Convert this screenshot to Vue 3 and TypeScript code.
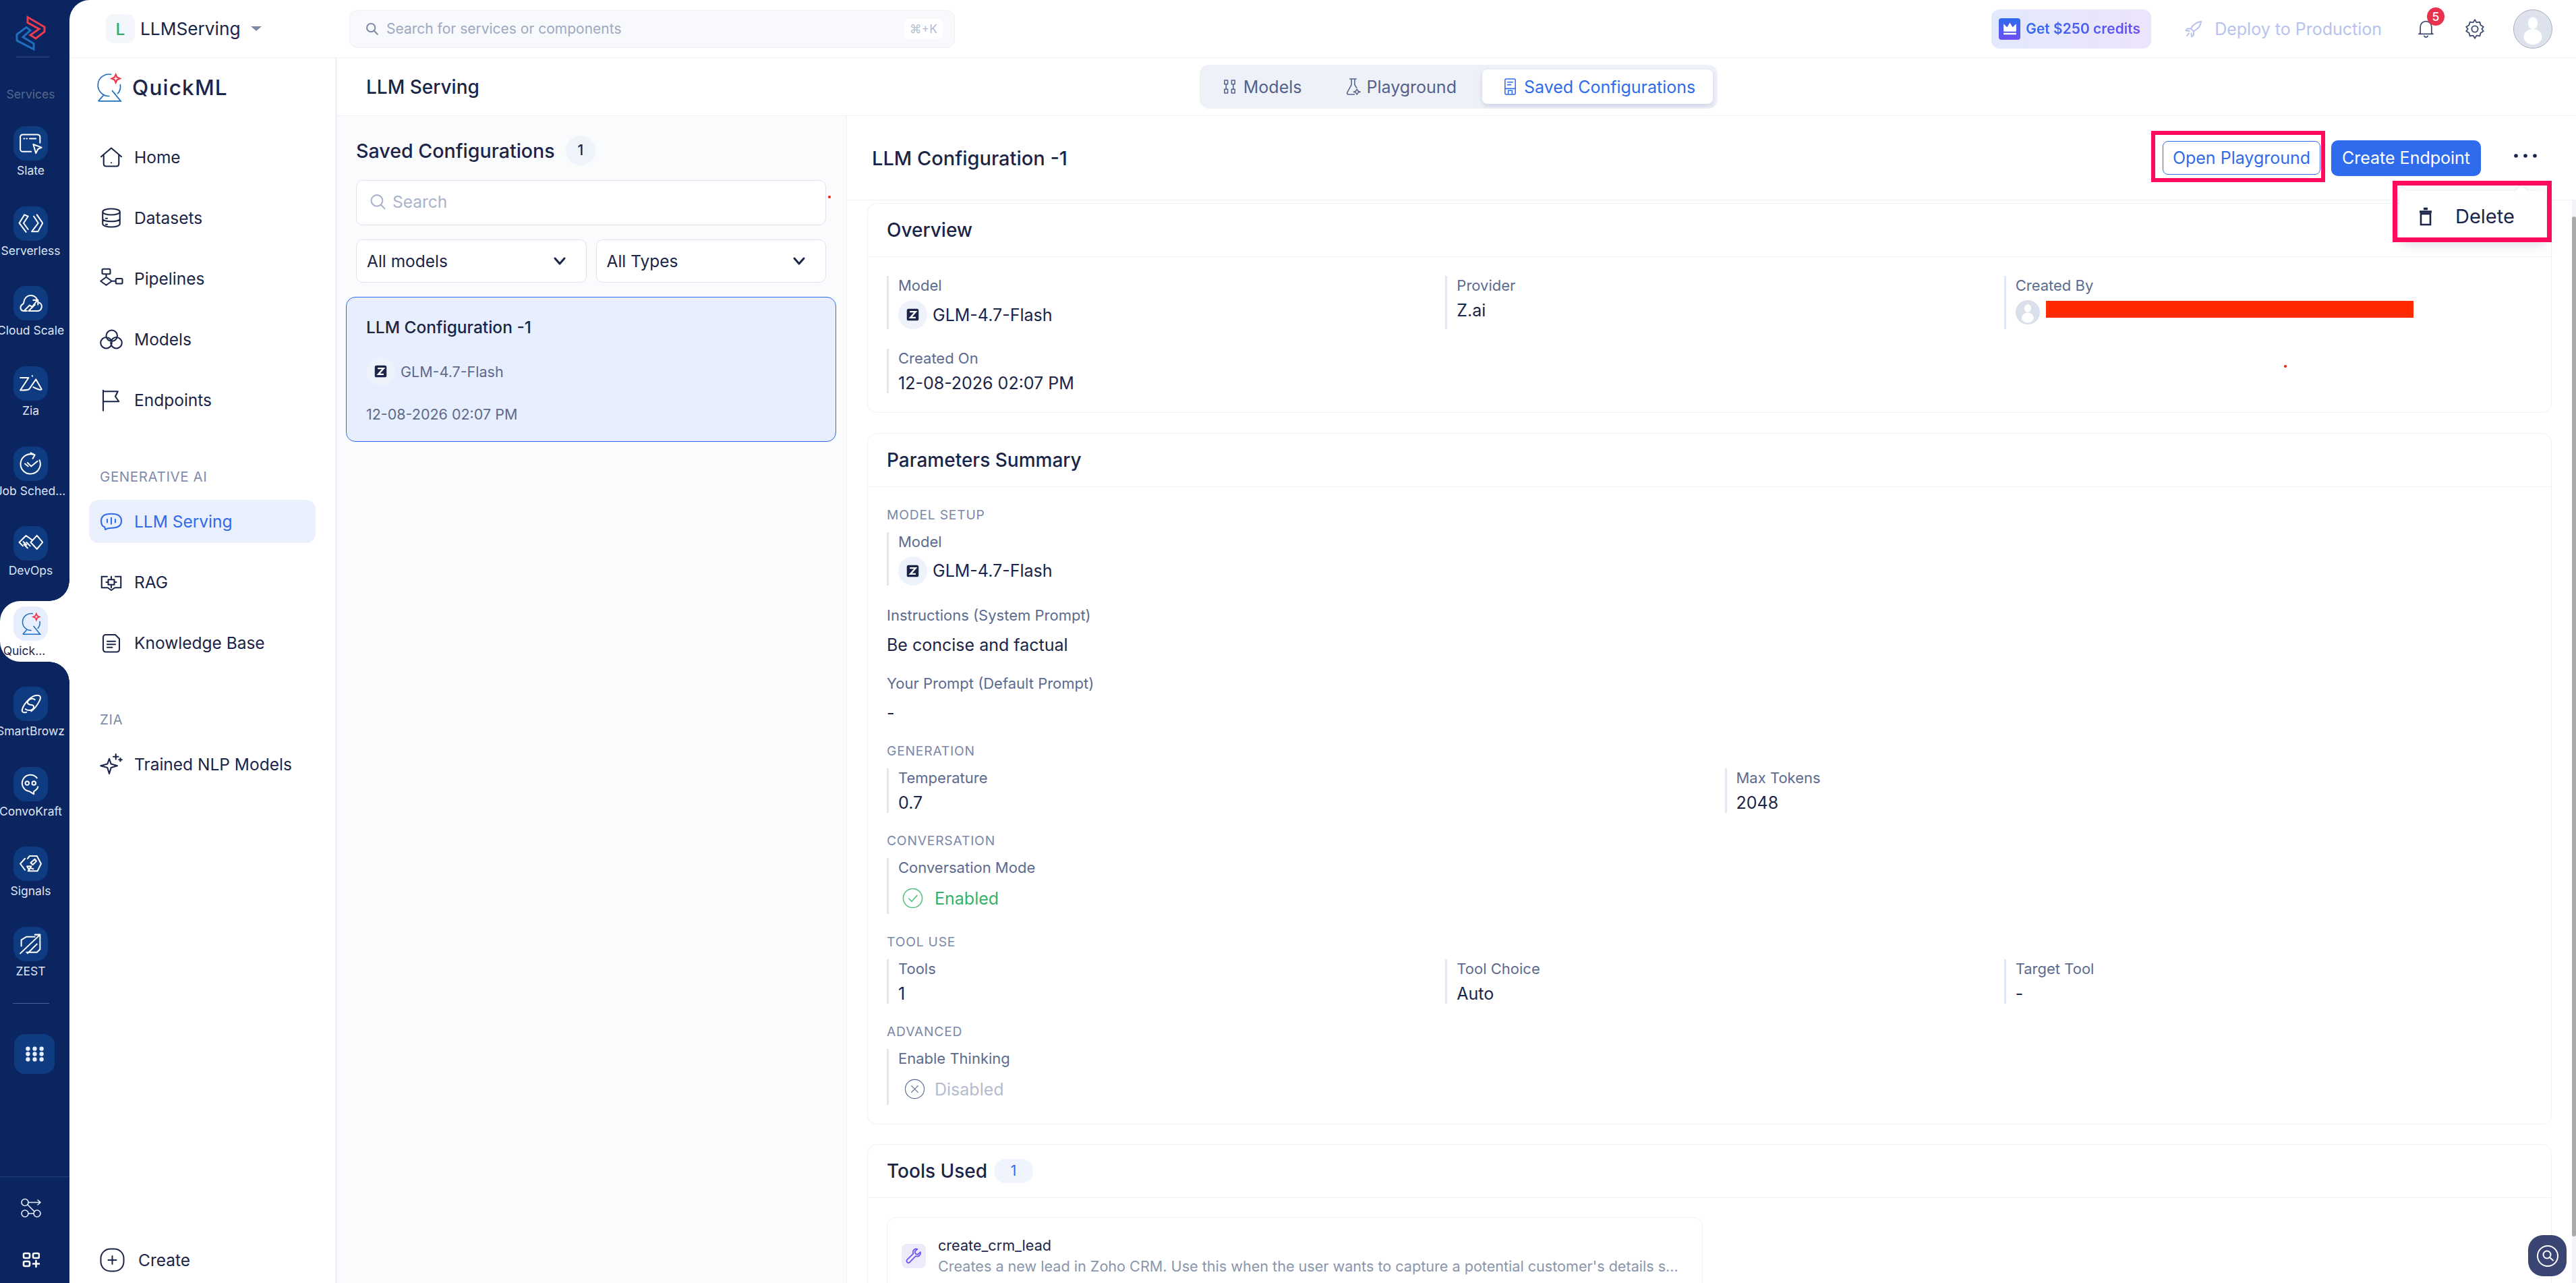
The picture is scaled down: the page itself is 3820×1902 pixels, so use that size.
<template>
  <div class="app">
    <aside class="rail">
      <div class="rail-logo">
        <svg class="logo-mark" viewBox="22 22 47 54" fill="none" stroke-width="3">
          <path stroke="#ee3a4f" d="M41 25.500 66 40v7L53 57l-8-5 13-9-17-9.500z" />
          <path stroke="#1f6fc0" d="M45 45l-6-4.500L25 51v9l25 13v-8.500L34 55z" />
        </svg>
      </div>
      <div class="rail-title">Services</div>
      <a v-for="item in railItems" :key="item.label" class="rail-item" :class="{ active: item.active }">
        <span class="rail-pill">
          <svg v-if="item.active" class="quick-small" viewBox="140 105 42 48" fill="none" stroke-width="2.200">
            <path stroke="#1f6fc0" d="M165 108.500a17.500 17.500 0 1 0-3 34.500M179 124a17 17 0 0 1-4.500 15.500M144 151h36l-14-17M144 151l8-9" />
            <path stroke="#ee3a4f" stroke-width="2.600" d="M172 108.500l2 4.500 4.500 2-4.500 2-2 4.500-2-4.500-4.500-2 4.500-2z" />
          </svg>
          <svg v-else class="rail-icon" viewBox="0 0 24 24" fill="none" stroke="currentColor" stroke-width="1.300" stroke-linecap="round" stroke-linejoin="round">
            <path :d="item.icon" />
          </svg>
        </span>
        <span class="rail-label">{{ item.label }}</span>
      </a>
      <div class="rail-rule"></div>
      <button class="rail-grid">
        <svg viewBox="0 0 24 24" fill="#e9eefb">
          <template v-for="y in [5, 12, 19]" :key="y">
            <circle v-for="x in [3, 12, 21]" :key="x" :cx="x" :cy="y" r="2.800" />
          </template>
        </svg>
      </button>
      <div class="rail-foot">
        <svg class="foot-flow" viewBox="0 0 30 29" fill="none" stroke="#e9eefb" stroke-width="1.600" stroke-linecap="round" stroke-linejoin="round">
          <circle cx="6" cy="6.500" r="5" />
          <circle cx="6" cy="23" r="5" />
          <circle cx="24" cy="23" r="5" />
          <path d="M11 6.500h18M25 3l4 3.500-4 3.500M10 10l10 10M11 23h8" />
        </svg>
        <svg class="foot-apps" viewBox="0 0 26 24" fill="none" stroke="#fff" stroke-width="2.600" stroke-linecap="round">
          <rect x="2" y="2" width="9" height="7" rx="2" />
          <rect x="16" y="2" width="9" height="7" rx="2" />
          <rect x="2" y="14" width="9" height="7" rx="2" />
          <path d="M20.500 13v9M16 17.500h9" />
        </svg>
      </div>
    </aside>

    <div class="shell">
      <header class="topbar">
        <div class="project">
          <span class="project-tile">L</span>
          <span class="project-name">LLMServing</span>
          <span class="project-caret"></span>
        </div>
        <div class="global-search">
          <svg class="search-icon" viewBox="0 0 24 24" fill="none" stroke="#7f8aa6" stroke-width="2.400" stroke-linecap="round">
            <circle cx="10.500" cy="10.500" r="7" />
            <path d="M16 16l5.500 5.500" />
          </svg>
          <span class="global-search-text">Search for services or components</span>
          <kbd class="shortcut">⌘+K</kbd>
        </div>
        <div class="top-actions">
          <div class="credits">
            <span class="crown">
              <svg viewBox="0 0 24 24" fill="#fff">
                <path d="M3 5l5 5 4-6.500L16 10l5-5v11H3zM3 18h18v2.500H3z" />
              </svg>
            </span>
            <span class="credits-text">Get $250 credits</span>
          </div>
          <div class="deploy">
            <svg class="rocket" viewBox="0 0 24 24" fill="none" stroke="#b7c2ee" stroke-width="1.700" stroke-linejoin="round" stroke-linecap="round">
              <path d="M21.500 2.500c-6 .5-10 3.500-13 9l3.500 3.500c5.500-3 9-7 9.500-12.500zM8.500 11.500H4L2 14l4.500.5M12 15v4.500L9.500 22 9 17.500M6 17.500l-2.500 3" />
            </svg>
            <span>Deploy to Production</span>
          </div>
          <span class="bell">
            <svg viewBox="0 0 24 28" fill="none" stroke="#3f4c6e" stroke-width="1.700" stroke-linecap="round" stroke-linejoin="round">
              <path d="M4 20V11a8 8 0 0 1 16 0v9l2 1H2zM9.500 24a2.700 2.700 0 0 0 5 0" />
            </svg>
            <b class="bell-badge">5</b>
          </span>
          <svg class="gear" viewBox="0 0 24 24" fill="none" stroke="#3f4c6e" stroke-width="1.500" stroke-linejoin="round">
            <path d="M12 1.500l2 3.300 3.800-.6 1.100 3.700 3.300 2-1.900 2.600 1.900 2.600-3.300 2-1.100 3.700-3.800-.6-2 3.300-2-3.300-3.800.6-1.100-3.700-3.300-2 1.900-2.600-1.900-2.600 3.300-2 1.100-3.700 3.800.6z" transform="translate(0 -.5)" />
            <circle cx="12" cy="12" r="3.700" />
          </svg>
          <span class="avatar">
            <svg viewBox="0 0 58 58" fill="#fff">
              <ellipse cx="29" cy="20" rx="7.500" ry="9" />
              <ellipse cx="29" cy="41" rx="14" ry="12" />
            </svg>
          </span>
        </div>
      </header>

      <div class="body">
        <nav class="side">
          <div class="brand">
            <svg class="brand-logo" viewBox="140 105 42 48" fill="none" stroke-width="1.800">
              <path stroke="#1f6fc0" d="M165 108.500a17.500 17.500 0 1 0-3 34.500M179 124a17 17 0 0 1-4.500 15.500M144 151h36l-14-17M144 151l8-9" />
              <path stroke="#ee3a4f" stroke-width="2.400" d="M172 108.500l2 4.500 4.500 2-4.500 2-2 4.500-2-4.500-4.500-2 4.500-2z" />
            </svg>
            <span class="brand-name">QuickML</span>
          </div>
          <div class="nav-list">
            <a v-for="item in navMain" :key="item.label" class="nav-item">
              <svg class="nav-icon" viewBox="0 0 24 24" fill="none" stroke="currentColor" stroke-width="1.400" stroke-linecap="round" stroke-linejoin="round"><path :d="item.icon" /></svg>
              {{ item.label }}
            </a>
          </div>
          <div class="nav-section">GENERATIVE AI</div>
          <div class="nav-list">
            <a v-for="item in navGenerative" :key="item.label" class="nav-item" :class="{ active: item.active }">
              <svg class="nav-icon" viewBox="0 0 24 24" fill="none" stroke="currentColor" stroke-width="1.400" stroke-linecap="round" stroke-linejoin="round"><path :d="item.icon" /></svg>
              {{ item.label }}
            </a>
          </div>
          <div class="nav-section">ZIA</div>
          <div class="nav-list">
            <a v-for="item in navZia" :key="item.label" class="nav-item">
              <svg class="nav-icon" viewBox="0 0 24 24" fill="none" stroke="currentColor" stroke-width="1.400" stroke-linecap="round" stroke-linejoin="round"><path :d="item.icon" /></svg>
              {{ item.label }}
            </a>
          </div>
          <a class="create">
            <svg class="create-icon" viewBox="0 0 37 36" fill="none" stroke="#1b2547" stroke-width="2" stroke-linecap="round">
              <rect x="1.500" y="1.500" width="34" height="33" rx="14" />
              <path d="M18.500 12v12M12.500 18h12" />
            </svg>
            Create
          </a>
        </nav>

        <main class="main">
          <div class="pagehead">
            <h1 class="page-title">LLM Serving</h1>
            <div class="tabs">
              <a v-for="tab in tabs" :key="tab.label" class="tab" :class="{ active: tab.active }">
                <svg class="tab-icon" viewBox="0 0 24 28" fill="none" stroke="currentColor" stroke-width="1.600" stroke-linecap="round" stroke-linejoin="round"><path :d="tab.icon" /></svg>
                {{ tab.label }}
              </a>
            </div>
          </div>

          <div class="content">
            <section class="list">
              <div class="list-head">
                <h2 class="list-title">Saved Configurations</h2>
                <span class="count-circle">1</span>
              </div>
              <div class="list-search">
                <svg class="list-search-icon" viewBox="0 0 24 24" fill="none" stroke="#a9b3c9" stroke-width="2" stroke-linecap="round">
                  <circle cx="10.500" cy="10.500" r="8" />
                  <path d="M16.500 16.500l5 5.500" />
                </svg>
                Search
              </div>
              <div class="selects">
                <div v-for="s in selects" :key="s" class="select">
                  {{ s }}
                  <svg class="chev" viewBox="0 0 20 14" fill="none" stroke="#1b2547" stroke-width="3" stroke-linecap="round" stroke-linejoin="round"><path d="M3 3l7 8 7-8" /></svg>
                </div>
              </div>
              <article class="config-card">
                <div class="config-title">LLM Configuration -1</div>
                <div class="config-model">
                  <span class="model-logo">
                    <svg viewBox="0 0 24 24"><rect x="2" y="2" width="20" height="20" rx="3" fill="#1b2547" /><path d="M7 7h10L8 17h9" fill="none" stroke="#fff" stroke-width="2.600" /></svg>
                  </span>
                  GLM-4.7-Flash
                </div>
                <div class="config-date">12-08-2026 02:07 PM</div>
              </article>
            </section>

            <section class="detail">
              <div class="detail-head">
                <h2 class="detail-title">LLM Configuration -1</h2>
                <div class="detail-actions">
                  <div class="annotated open-note">
                    <button class="btn btn-outline">Open Playground</button>
                  </div>
                  <button class="btn btn-primary">Create Endpoint</button>
                  <button class="more">
                    <svg viewBox="0 0 36 10" fill="#1b2547"><circle cx="4" cy="5" r="2.800" /><circle cx="18" cy="5" r="2.800" /><circle cx="32" cy="5" r="2.800" /></svg>
                  </button>
                  <div class="popover">
                    <svg class="trash" viewBox="0 0 20 28" fill="none" stroke="#1b2547" stroke-width="2.600">
                      <path d="M3 10h14v16H3z" />
                      <path d="M1 7h18M7 2.500h6" stroke-width="3.400" />
                    </svg>
                    Delete
                  </div>
                  <div class="delete-note"></div>
                </div>
              </div>

              <div class="detail-body">
                <div class="panel">
                  <div class="panel-head">Overview</div>
                  <div class="panel-body overview">
                    <div class="field">
                      <div class="label">Model</div>
                      <div class="model-value">
                        <span class="model-logo">
                          <svg viewBox="0 0 24 24"><rect x="2" y="2" width="20" height="20" rx="3" fill="#1b2547" /><path d="M7 7h10L8 17h9" fill="none" stroke="#fff" stroke-width="2.600" /></svg>
                        </span>
                        GLM-4.7-Flash
                      </div>
                    </div>
                    <div class="field">
                      <div class="label">Provider</div>
                      <div class="value">Z.ai</div>
                    </div>
                    <div class="field">
                      <div class="label">Created By</div>
                      <div class="creator">
                        <span class="creator-avatar">
                          <svg viewBox="0 0 36 36" fill="#fff"><ellipse cx="18" cy="12" rx="5" ry="6" /><ellipse cx="18" cy="26" rx="9" ry="7.500" /></svg>
                        </span>
                        <span class="redacted"></span>
                      </div>
                    </div>
                    <div class="field">
                      <div class="label">Created On</div>
                      <div class="value">12-08-2026 02:07 PM</div>
                    </div>
                  </div>
                </div>

                <div class="panel">
                  <div class="panel-head">Parameters Summary</div>
                  <div class="panel-body params">
                    <div class="group-label">MODEL SETUP</div>
                    <div class="field">
                      <div class="label">Model</div>
                      <div class="model-value">
                        <span class="model-logo">
                          <svg viewBox="0 0 24 24"><rect x="2" y="2" width="20" height="20" rx="3" fill="#1b2547" /><path d="M7 7h10L8 17h9" fill="none" stroke="#fff" stroke-width="2.600" /></svg>
                        </span>
                        GLM-4.7-Flash
                      </div>
                    </div>
                    <div class="plain plain-first">
                      <div class="label">Instructions (System Prompt)</div>
                      <div class="value plain-value">Be concise and factual</div>
                    </div>
                    <div class="plain">
                      <div class="label">Your Prompt (Default Prompt)</div>
                      <div class="value plain-value">-</div>
                    </div>

                    <div class="group">
                      <div class="group-label">GENERATION</div>
                      <div class="two-col">
                        <div class="field">
                          <div class="label">Temperature</div>
                          <div class="value">0.7</div>
                        </div>
                        <div class="field">
                          <div class="label">Max Tokens</div>
                          <div class="value">2048</div>
                        </div>
                      </div>
                    </div>

                    <div class="group">
                      <div class="group-label">CONVERSATION</div>
                      <div class="field">
                        <div class="label">Conversation Mode</div>
                        <div class="status enabled">
                          <svg viewBox="0 0 32 32" fill="none" stroke="#4fc27c" stroke-width="1.600" stroke-linecap="round" stroke-linejoin="round"><circle cx="16" cy="16" r="14.500" /><path d="M10 16.500l4.500 4.500 8-9" /></svg>
                          Enabled
                        </div>
                      </div>
                    </div>

                    <div class="group">
                      <div class="group-label">TOOL USE</div>
                      <div class="three-col">
                        <div class="field">
                          <div class="label">Tools</div>
                          <div class="value">1</div>
                        </div>
                        <div class="field">
                          <div class="label">Tool Choice</div>
                          <div class="value">Auto</div>
                        </div>
                        <div class="field">
                          <div class="label">Target Tool</div>
                          <div class="value">-</div>
                        </div>
                      </div>
                    </div>

                    <div class="group">
                      <div class="group-label">ADVANCED</div>
                      <div class="field">
                        <div class="label">Enable Thinking</div>
                        <div class="status disabled">
                          <svg viewBox="0 0 32 32" fill="none" stroke="#5c6b8f" stroke-width="1.200" stroke-linecap="round"><circle cx="16" cy="16" r="14.500" /><path d="M11 11l10 10M21 11L11 21" /></svg>
                          Disabled
                        </div>
                      </div>
                    </div>
                  </div>
                </div>

                <div class="panel">
                  <div class="panel-head">
                    Tools Used
                    <span class="count-pill">1</span>
                  </div>
                  <div class="panel-body">
                    <div class="tool-card">
                      <span class="tool-tile">
                        <svg viewBox="0 0 24 24" fill="none" stroke="#6a4ff0" stroke-width="1.600" stroke-linejoin="round">
                          <path d="M21 6.500l-3.500 3.500-3-1-1-3L17 2.500c-2.500-.8-6 .5-6 4 0 1 .2 1.600.5 2.200L3 17c-1 1-1 2.500 0 3.500s2.500 1 3.500 0l8.300-8.500c3 1.500 7.500-1 6.200-5.500z" />
                        </svg>
                      </span>
                      <div class="tool-text">
                        <div class="tool-name">create_crm_lead</div>
                        <div class="tool-desc">Creates a new lead in Zoho CRM. Use this when the user wants to capture a potential customer's details s...</div>
                      </div>
                    </div>
                  </div>
                </div>
              </div>
              <div class="scroll-thumb"></div>
            </section>
            <i class="speck speck-a"></i>
            <i class="speck speck-b"></i>
          </div>
        </main>
      </div>
    </div>

    <button class="help">
      <svg viewBox="0 0 36 36" fill="none" stroke="#fff" stroke-width="2" stroke-linecap="round">
        <circle cx="18" cy="18" r="15" />
        <circle cx="17" cy="16" r="5.500" />
        <path d="M21 20l5 4.500" />
      </svg>
    </button>
  </div>
</template>

<script setup lang="ts">
interface RailItem {
  label: string
  icon: string
  active?: boolean
}

interface NavItem {
  label: string
  icon: string
  active?: boolean
}

const railItems: RailItem[] = [
  { label: 'Slate', icon: 'M21 11.500V6a2.500 2.500 0 0 0-2.500-2.500h-14A2.500 2.500 0 0 0 2 6v11.500A2.500 2.500 0 0 0 4.500 20h8M5.500 7.500h.5M8 7.500h.5M11 7.500h6M14.500 13l8 3-3.500 1.500-2 4z' },
  { label: 'Serverless', icon: 'M7.500 20L1 11.500 6 3.500 9.500 5 5.200 11.500 9.500 17.500M18 3.500l5.500 8L19 19.700h-6l6.300-8.200L15 5' },
  { label: 'Cloud Scale', icon: 'M8.500 19.500h-3c-3 0-4.500-3.500-2-6 1-1 1.500-.5 1.800-2 .5-4 3-7 7-7 3 0 5.500 2 6 4.500M19 11c3 .5 4 3 3.500 5-.5 2-2 3.500-4 3.500H10l6-6M6 19l5-5 2.500 1.500 5-6.500M14.500 9H19v4.500' },
  { label: 'Zia', icon: 'M2 6.500h8L2 18.500c3 0 6 .2 8.500-1M13.500 4.500v.5M10.500 17.500L17 8l5.500 9.500c-.5 1-3.500.5-8-2' },
  { label: 'Job Sched...', icon: 'M20.500 8.500a9.500 9.500 0 1 1-5-5M12 1.500l4 2-2 3.500M6.500 12l3 2.500M9 11l3.500 3.500 6-5' },
  { label: 'DevOps', icon: 'M18 4.500l5.500 6.500-5.500 6.500-6-6.500zM13 8.500L7.500 4.500 1 11l3.500 3.500M5 10.500l3 3M5.500 13L9 16.500M8 11l3.500 3.500' },
  { label: 'Quick...', icon: '', active: true },
  { label: 'SmartBrowz', icon: 'M8 20c-3 1-5-.5-4-3 1-4 4-7 6-9 3-3 7-5 10-4 2 .8 1.500 3 .5 5M16 8c-2-2-6-1-7 2-.5 2 2 3 4 3 2 .5 3 2 1 4-2 1.500-5 1.500-7 0M20.500 9c-2 4-5 8-8 10' },
  { label: 'ConvoKraft', icon: 'M18 6A8 8 0 1 0 11 19l4 2.500V19c2-1 3.500-2.500 4-4.500M6.800 11a1.800 1.800 0 1 0 3.600 0a1.800 1.800 0 1 0-3.600 0M13.300 11a1.800 1.800 0 1 0 3.600 0a1.800 1.800 0 1 0-3.600 0' },
  { label: 'Signals', icon: 'M6.500 7L2 12l4.500 6M9 7l2-2.500h7L22 12l-3.500 7h-9l2-3 3 1M12 11l4-3.500 1.500 2-3.500 3.500zM8.500 14.500h4l-2 3.500z' },
  { label: 'ZEST', icon: 'M3 14V8l5-3h8M21 9v8l-3 3H8M2 21L21 3M16 3h5v5M9 21l9-9' },
]

const navMain: NavItem[] = [
  { label: 'Home', icon: 'M2 11.500L12 3l10 8.500M4.500 10v8.500c0 1.500 1 2.500 2.500 2.500h10c1.500 0 2.500-1 2.500-2.500V10M12 17.500h.01' },
  { label: 'Datasets', icon: 'M3.500 6c0-1.700 3.800-3 8.500-3s8.500 1.300 8.500 3v12c0 1.700-3.800 3-8.500 3s-8.500-1.300-8.500-3zM3.500 6c0 1.700 3.800 3 8.500 3s8.500-1.300 8.500-3M3.500 13c0 1.500 3.800 2.500 8.500 2.500s8.500-1 8.500-2.500M6.500 12.500h1.500M6.500 18.500h1.500' },
  { label: 'Pipelines', icon: 'M4 2.500h6a1 1 0 0 1 1 1v3a1 1 0 0 1-1 1H4a1 1 0 0 1-1-1v-3a1 1 0 0 1 1-1zM7 7.500v3M7 10.500l5.500 4-5.500 4-5.500-4zM12.500 14.500h4M17.500 12h4.500a1 1 0 0 1 1 1v3a1 1 0 0 1-1 1h-4.500a1 1 0 0 1-1-1v-3a1 1 0 0 1 1-1z' },
  { label: 'Models', icon: 'M7 8.500a5.500 5.500 0 1 0 11 0a5.500 5.500 0 1 0-11 0M1.500 15.500a5.500 5.500 0 1 0 11 0a5.500 5.500 0 1 0-11 0M11.500 15.500a5.500 5.500 0 1 0 11 0a5.500 5.500 0 1 0-11 0' },
  { label: 'Endpoints', icon: 'M4 2.500v20M4 3.500h14.500L16 8.500l3.500 5H4' },
]

const navGenerative: NavItem[] = [
  { label: 'LLM Serving', icon: 'M12 4.500c5.500 0 10 1.800 10 7s-4.500 7-10 7c-1.800 0-4 .2-6 1.500l-.5-2.500C3 17 2 14.500 2 11.500c0-5.200 4.500-7 10-7zM8 10v3M12 8.500v6M16 10v3', active: true },
  { label: 'RAG', icon: 'M8 6.500H2.500v11h6l3.500 2.500 3.500-2.500h6v-11H16M9 9.500h6v5H9zM12 6.500v3M12 14.500v3M7 12h2M15 12h2' },
  { label: 'Knowledge Base', icon: 'M4 6.500A2.500 2.500 0 0 1 6.500 4H16l4 4v10.500a2.500 2.500 0 0 1-2.500 2.500h-11A2.500 2.500 0 0 1 4 18.500zM8 10.500h8M8 13.500h8M8 16.500h5' },
]

const navZia: NavItem[] = [
  { label: 'Trained NLP Models', icon: 'M10 6.500l1.800 5.200 6.200 1.800-6.200 1.800-1.800 6-1.800-6-6.700-1.800 6.700-1.800zM16.500 2v5M14 4.500h5M21 6v3M19.500 7.500h3' },
]

const tabs: NavItem[] = [
  { label: 'Models', icon: 'M4 4h5v6H4zM15 4h5v6h-5zM4 18h5v6H4zM15 18h5v6h-5zM6.500 10v8M17.500 10v8', },
  { label: 'Playground', icon: 'M7 2h10M9.500 2v9L3 23c-.7 1.500 0 3 2 3h9M14.500 2v9l3 5M18 18l2 3 3 1-3 1-2 3-2-3-3-1 3-1z' },
  { label: 'Saved Configurations', icon: 'M6 2h12a2 2 0 0 1 2 2v20a2 2 0 0 1-2 2H6a2 2 0 0 1-2-2V4a2 2 0 0 1 2-2zM8 7h8M8 11h5M4 17h16M9 20h6v6H9z', active: true },
]

const selects: string[] = ['All models', 'All Types']
</script>

<style>
html,
body {
  margin: 0;
  background: #fff;
  overflow: hidden;
}
</style>

<style scoped>
.app {
  display: flex;
  position: relative;
  height: 100vh;
  overflow: hidden;
  background: #0b2560;
  color: #1b2547;
  font-family: Inter, "Noto Sans", sans-serif;
  font-size: 24.500px;
}

h1,
h2 {
  margin: 0;
  font-weight: 500;
}

button {
  font-family: inherit;
  border: 0;
  padding: 0;
  background: none;
}

/* left rail */
.rail {
  flex: none;
  width: 103px;
  display: flex;
  flex-direction: column;
  background: #0b2560;
}

.rail-logo {
  height: 85px;
  margin: 0 30px 0 24px;
  border-bottom: 1px solid #3a5088;
  box-sizing: border-box;
  padding-top: 22px;
}

.logo-mark {
  display: block;
  width: 47px;
  height: 54px;
  margin-left: -2px;
}

.rail-title {
  width: 91px;
  margin-top: 43px;
  height: 24px;
  line-height: 24px;
  margin-bottom: 35px;
  text-align: center;
  font-size: 17.500px;
  color: #56688f;
}

.rail-item {
  position: relative;
  width: 91px;
  height: 118.700px;
  display: flex;
  flex-direction: column;
  align-items: center;
  color: #dde4f5;
}

.rail-pill {
  position: relative;
  z-index: 1;
  width: 51px;
  height: 51px;
  border-radius: 18px;
  background: #0f3c80;
  display: flex;
  align-items: center;
  justify-content: center;
  color: #fff;
}

.rail-icon {
  width: 37px;
  height: 37px;
}

.quick-small {
  width: 30px;
  height: 35px;
}

.rail-label {
  position: relative;
  z-index: 1;
  margin-top: 3px;
  font-size: 17.500px;
  line-height: 24px;
  white-space: nowrap;
}

.rail-item.active {
  color: #1b2547;
}

.rail-item.active .rail-pill {
  background: #e7eefd;
}

.rail-item.active .rail-label {
  margin-right: 19px;
}

.rail-item.active::before {
  content: "";
  position: absolute;
  top: -8px;
  left: 0;
  width: 103px;
  height: 90px;
  background: #fff;
  border-radius: 30px 0 0 30px;
}

.rail-item.active::after {
  content: "";
  position: absolute;
  top: -38px;
  left: 73px;
  width: 30px;
  height: 150px;
  background:
    radial-gradient(circle at 0 0, transparent 29.500px, #fff 30px) top / 30px 30px no-repeat,
    radial-gradient(circle at 0 100%, transparent 29.500px, #fff 30px) bottom / 30px 30px no-repeat;
}

.rail-rule {
  width: 54px;
  height: 1px;
  margin: -6px 0 0 19px;
  background: #4a5f92;
}

.rail-grid {
  width: 60px;
  height: 59px;
  margin: 45px 0 0 21px;
  border-radius: 16px;
  background: #0f3c80;
  display: flex;
  align-items: center;
  justify-content: center;
}

.rail-grid svg {
  width: 27px;
  height: 27px;
}

.rail-foot {
  margin-top: auto;
  height: 158px;
  box-sizing: border-box;
  border-top: 1px solid #24407c;
  display: flex;
  flex-direction: column;
  align-items: center;
  padding: 31px 12px 0 0;
}

.foot-flow {
  width: 30px;
  height: 29px;
}

.foot-apps {
  width: 26px;
  height: 24px;
  margin-top: 51px;
}

/* shell */
.shell {
  flex: 1;
  min-width: 0;
  display: flex;
  flex-direction: column;
  background: #fff;
  border-top-left-radius: 30px;
}

.topbar {
  flex: none;
  height: 86px;
  box-sizing: border-box;
  border-bottom: 1px solid #eef1f7;
  display: flex;
  align-items: center;
  padding: 0 35px 0 54px;
}

.project {
  display: flex;
  align-items: center;
  width: 232px;
}

.project-tile {
  width: 43px;
  height: 43px;
  border-radius: 10px;
  background: #f3f7fb;
  color: #3aa860;
  font-size: 24.500px;
  font-weight: 500;
  display: flex;
  align-items: center;
  justify-content: center;
}

.project-name {
  margin-left: 8px;
  font-size: 26.250px;
  white-space: nowrap;
}

.project-caret {
  margin-left: 15px;
  width: 0;
  height: 0;
  border-left: 8px solid transparent;
  border-right: 8px solid transparent;
  border-top: 7px solid #7d89a8;
}

.global-search {
  width: 898px;
  height: 56px;
  margin-left: 129px;
  box-sizing: border-box;
  border: 1px solid #eef1f8;
  border-radius: 12px;
  background: #f7f9fd;
  display: flex;
  align-items: center;
  padding: 0 17px 0 22px;
}

.search-icon {
  width: 21px;
  height: 21px;
  flex: none;
}

.global-search-text {
  margin-left: 11px;
  font-size: 21px;
  color: #9ea9bf;
}

.shortcut {
  margin-left: auto;
  width: 57px;
  height: 30px;
  border-radius: 6px;
  background: #fff;
  font-family: Inter, "DejaVu Sans", sans-serif;
  font-size: 17.500px;
  line-height: 30px;
  text-align: center;
  color: #b5bdd0;
}

.top-actions {
  margin-left: auto;
  display: flex;
  align-items: center;
}

.credits {
  width: 237px;
  height: 58px;
  box-sizing: border-box;
  border-radius: 12px;
  background: linear-gradient(90deg, #e3e9fd, #ece4fb);
  display: flex;
  align-items: center;
  padding-left: 11px;
}

.crown {
  width: 32px;
  height: 32px;
  border-radius: 4px;
  background: linear-gradient(180deg, #2f6bed, #6c4ff2);
  display: flex;
  align-items: center;
  justify-content: center;
}

.crown svg {
  width: 25px;
  height: 25px;
}

.credits-text {
  margin-left: 8px;
  font-size: 21px;
  font-weight: 600;
  white-space: nowrap;
  background: linear-gradient(90deg, #2f6bed, #6c4ff2);
  -webkit-background-clip: text;
  background-clip: text;
  color: transparent;
}

.deploy {
  margin-left: 49px;
  display: flex;
  align-items: center;
  font-size: 25px;
  color: #b7c2ee;
  white-space: nowrap;
}

.rocket {
  width: 28px;
  height: 28px;
  margin-right: 17px;
}

.bell {
  position: relative;
  margin-left: 53px;
  width: 25px;
  height: 30px;
}

.bell svg {
  display: block;
  width: 25px;
  height: 30px;
}

.bell-badge {
  position: absolute;
  top: -17px;
  left: 14px;
  width: 26px;
  height: 27px;
  border-radius: 50%;
  background: #e8334f;
  color: #fff;
  font-size: 17.500px;
  font-weight: 500;
  line-height: 27px;
  text-align: center;
}

.gear {
  width: 30px;
  height: 30px;
  margin-left: 45px;
}

.avatar {
  width: 58px;
  height: 58px;
  margin-left: 42px;
  box-sizing: border-box;
  border: 1px solid #a8b0c0;
  border-radius: 50%;
  background: #dde2ec;
  overflow: hidden;
}

.avatar svg {
  display: block;
  width: 56px;
  height: 56px;
}

.body {
  flex: 1;
  min-height: 0;
  display: flex;
}

/* secondary nav */
.side {
  flex: none;
  width: 397px;
  box-sizing: border-box;
  border-right: 3px solid #f0f3f8;
  display: flex;
  flex-direction: column;
  padding: 21px 29px 16px;
  background: #fff;
}

.brand {
  display: flex;
  align-items: center;
  height: 45px;
  padding-left: 10px;
  margin-bottom: 49px;
}

.brand-logo {
  width: 39px;
  height: 45px;
}

.brand-name {
  margin-left: 15px;
  font-size: 31.500px;
  font-weight: 500;
  letter-spacing: 1.200px;
}

.nav-list {
  display: flex;
  flex-direction: column;
  gap: 26px;
}

.nav-item {
  height: 64px;
  display: flex;
  align-items: center;
  gap: 16px;
  padding-left: 15px;
  border-radius: 14px;
  white-space: nowrap;
}

.nav-item.active {
  background: #e9effc;
  color: #2f6bed;
}

.nav-icon {
  width: 36px;
  height: 36px;
  flex: none;
}

.nav-section {
  height: 24px;
  line-height: 24px;
  margin: 70px 0 22px 16px;
  font-size: 20.500px;
  color: #7f8cab;
  letter-spacing: 0.6px;
}

.create {
  margin-top: auto;
  display: flex;
  align-items: center;
  gap: 20px;
  padding-left: 16px;
  height: 36px;
}

.create-icon {
  width: 37px;
  height: 36px;
}

/* page */
.main {
  flex: 1;
  min-width: 0;
  display: flex;
  flex-direction: column;
}

.pagehead {
  flex: none;
  height: 86px;
  box-sizing: border-box;
  border-bottom: 1px solid #eef1f7;
  display: grid;
  grid-template-columns: 1fr auto 1fr;
  align-items: center;
  padding: 0 37px 0 43px;
}

.page-title {
  font-size: 28px;
  white-space: nowrap;
}

.tabs {
  display: flex;
  align-items: center;
  gap: 12px;
  height: 65px;
  box-sizing: border-box;
  padding: 7px;
  border-radius: 14px;
  background: #eef1f8;
  font-size: 25px;
}

.tab {
  height: 51px;
  display: flex;
  align-items: center;
  gap: 9px;
  padding: 0 26px;
  border-radius: 8px;
  color: #53628a;
  white-space: nowrap;
}

.tab.active {
  background: #fff;
  color: #2f6bed;
  padding: 0 26px 0 30px;
  box-shadow: 0 3px 7px rgba(80, 100, 160, 0.22);
}

.tab-icon {
  width: 23px;
  height: 27px;
  flex: none;
}

.content {
  position: relative;
  flex: 1;
  min-height: 0;
  display: flex;
}

.speck {
  position: absolute;
  width: 4px;
  height: 4px;
  border-radius: 50%;
  background: #f21c0c;
}

.speck-a {
  left: 728px;
  top: 118px;
}

.speck-b {
  left: 2887px;
  top: 369px;
}

.list {
  flex: none;
  width: 756px;
  box-sizing: border-box;
  padding: 29px 30px 0 28px;
  background: #fafbfc;
  border-right: 1px solid #eef1f7;
}

.list-head {
  display: flex;
  align-items: center;
  gap: 16px;
  height: 44px;
  margin-bottom: 22px;
}

.list-title {
  font-size: 28.600px;
  white-space: nowrap;
}

.count-circle {
  width: 44px;
  height: 44px;
  border-radius: 50%;
  background: #eff3fa;
  font-size: 21px;
  font-weight: 500;
  line-height: 44px;
  text-align: center;
}

.list-search {
  height: 67px;
  box-sizing: border-box;
  border: 1px solid #dfe3ee;
  border-radius: 10px;
  background: #fff;
  display: flex;
  align-items: center;
  padding: 0 0 3px 19px;
  gap: 9px;
  color: #a9b3c9;
}

.list-search-icon {
  width: 25px;
  height: 26px;
}

.selects {
  display: grid;
  grid-template-columns: 1fr 1fr;
  gap: 14px;
  margin: 21px 0;
}

.select {
  height: 64px;
  box-sizing: border-box;
  border: 1px solid #dfe3ee;
  border-radius: 10px;
  background: #fff;
  display: flex;
  align-items: center;
  justify-content: space-between;
  padding: 0 29px 0 15px;
}

.chev {
  width: 20px;
  height: 14px;
}

.config-card {
  margin: 0 -15px;
  height: 215px;
  box-sizing: border-box;
  padding: 28px 29px;
  border: 1px solid #2f6bed;
  border-radius: 14px;
  background: #e7eefd;
}

.config-title {
  font-size: 24.500px;
  font-weight: 500;
  line-height: 32px;
}

.config-model {
  margin-top: 28px;
  display: flex;
  align-items: center;
  gap: 8px;
  font-size: 21.500px;
  color: #5d6a8a;
}

.config-date {
  margin-top: 28px;
  line-height: 28px;
  font-size: 21.500px;
  color: #5d6a8a;
}

.model-logo {
  width: 43px;
  height: 43px;
  flex: none;
  border-radius: 50%;
  background: #eef2fb;
  display: flex;
  align-items: center;
  justify-content: center;
}

.model-logo svg {
  width: 21px;
  height: 21px;
}

/* detail */
.detail {
  position: relative;
  flex: 1;
  min-width: 0;
  display: flex;
  flex-direction: column;
  overflow: hidden;
}

.detail::after {
  content: "";
  position: absolute;
  right: 0;
  top: 125px;
  bottom: 0;
  width: 6px;
  background: #f3f4f8;
}

.detail-head {
  flex: none;
  height: 125px;
  box-sizing: border-box;
  border-bottom: 1px solid #eef1f7;
  display: flex;
  align-items: center;
  justify-content: space-between;
  padding: 0 57px 0 37px;
}

.detail-title {
  font-size: 29px;
  white-space: nowrap;
}

.detail-actions {
  position: relative;
  display: flex;
  align-items: center;
  gap: 16px;
  z-index: 2;
}

.annotated {
  position: relative;
}

.annotated::after,
.delete-note {
  content: "";
  position: absolute;
  box-sizing: border-box;
  pointer-events: none;
}

.open-note::after {
  inset: -15px -7px -11px -17px;
  border: 6px solid #ff0a5c;
}

.btn {
  display: block;
  font-size: 25px;
  white-space: nowrap;
  border-radius: 8px;
}

.btn-outline {
  width: 234px;
  height: 50px;
  border: 1px solid #2f6bed;
  color: #2f6bed;
  background: #fff;
}

.btn-primary {
  width: 222px;
  height: 53px;
  background: #2f6bed;
  color: #fff;
  border-radius: 10px;
}

.more {
  width: 36px;
  height: 10px;
  margin: -6px 0 0 32px;
}

.more svg {
  display: block;
}

.popover {
  position: absolute;
  top: 75px;
  right: -13px;
  z-index: 3;
  width: 218px;
  height: 76px;
  box-sizing: border-box;
  background: #fff;
  border-radius: 10px;
  box-shadow: 0 4px 16px rgba(60, 75, 120, 0.18);
  display: flex;
  align-items: center;
  gap: 34px;
  padding-left: 29px;
  font-size: 29px;
}

.popover::before {
  content: "";
  position: absolute;
  top: -6px;
  right: 30px;
  width: 14px;
  height: 14px;
  background: #fff;
  transform: rotate(45deg);
  box-shadow: -1px -1px 2px rgba(60, 75, 120, 0.1);
}

.trash {
  width: 20px;
  height: 28px;
}

.delete-note {
  top: 60px;
  right: -21px;
  z-index: 4;
  width: 236px;
  height: 91px;
  border: 7px solid #ff0a5c;
}

.detail-body {
  flex: 1;
  min-height: 0;
  overflow: hidden;
  display: flex;
  flex-direction: column;
  gap: 29.500px;
  padding: 4px 36px 0 30px;
}

.scroll-thumb {
  position: absolute;
  right: 0;
  top: 149px;
  z-index: 1;
  width: 6px;
  height: 1512px;
  border-radius: 3px;
  background: #a9a9a9;
}

.panel {
  flex: none;
  border: 1px solid #eef1f7;
  border-radius: 14px;
  background: #fff;
}

.panel-head {
  height: 79px;
  box-sizing: border-box;
  border-bottom: 1px solid #eef1f7;
  display: flex;
  align-items: center;
  gap: 10px;
  padding-left: 28px;
  font-size: 28px;
  font-weight: 500;
}

.panel-body {
  padding: 28px;
}

.overview {
  display: grid;
  grid-template-columns: repeat(3, 1fr);
  gap: 29px 45px;
}

.field {
  border-left: 3px solid #e2e7f5;
  padding-left: 14px;
}

.label {
  height: 28px;
  line-height: 28px;
  font-size: 22px;
  color: #5c6b8f;
  white-space: nowrap;
}

.value {
  margin-top: 8px;
  line-height: 30px;
  font-size: 25px;
  white-space: nowrap;
}

.model-value {
  margin-top: 8px;
  display: flex;
  align-items: center;
  gap: 8px;
  font-size: 25px;
}

.creator {
  margin-top: 8px;
  height: 43px;
  display: flex;
  gap: 9px;
}

.creator-avatar {
  width: 36px;
  height: 36px;
  border-radius: 50%;
  background: #d9dfeb;
}

.creator-avatar svg {
  display: block;
}

.redacted {
  width: 545px;
  height: 25px;
  margin-top: 1px;
  background: #ff2a00;
}

.params {
  padding-top: 29px;
}

.group-label {
  height: 24px;
  line-height: 24px;
  margin-bottom: 14px;
  font-size: 19.250px;
  letter-spacing: 0.8px;
  color: #7a87a8;
}

.plain-first {
  margin-top: 30px;
}

.plain + .plain {
  margin-top: 28px;
}

.plain-value {
  margin-top: 15px;
}

.group {
  margin-top: 29px;
}

.plain + .group {
  margin-top: 29px;
}

.two-col {
  display: grid;
  grid-template-columns: 1fr 1fr;
  gap: 45px;
}

.three-col {
  display: grid;
  grid-template-columns: repeat(3, 1fr);
  gap: 45px;
}

.status {
  display: flex;
  align-items: center;
  height: 30px;
  padding: 17px 0 8px;
  font-size: 25px;
}

.status svg {
  width: 31px;
  height: 31px;
}

.status.enabled {
  color: #35b36b;
  gap: 17px;
  padding-left: 6px;
}

.status.disabled {
  color: #b4bccd;
  gap: 14px;
  padding-left: 9px;
}

.count-pill {
  width: 58px;
  height: 36px;
  border-radius: 18px;
  background: #f0f4fd;
  color: #2f6bed;
  font-size: 21px;
  font-weight: 400;
  line-height: 36px;
  text-align: center;
}

.tool-card {
  width: 1210px;
  box-sizing: border-box;
  border: 1px solid #eef1f7;
  border-radius: 14px;
  display: flex;
  align-items: center;
  gap: 18px;
  padding: 26px 30px 26px 21px;
}

.tool-tile {
  width: 36px;
  height: 36px;
  flex: none;
  border-radius: 8px;
  background: #eeeafc;
  display: flex;
  align-items: center;
  justify-content: center;
}

.tool-tile svg {
  width: 26px;
  height: 26px;
}

.tool-text {
  min-width: 0;
}

.tool-name,
.tool-desc {
  line-height: 30px;
  font-size: 21.600px;
  white-space: nowrap;
  overflow: hidden;
}

.tool-desc {
  margin-top: 1px;
  color: #8a96ac;
}

/* floating help */
.help {
  position: absolute;
  right: 14px;
  bottom: 10px;
  width: 57px;
  height: 61px;
  border-radius: 22px;
  background: #3a4573;
  display: flex;
  align-items: center;
  justify-content: center;
}

.help svg {
  width: 36px;
  height: 36px;
}
</style>
